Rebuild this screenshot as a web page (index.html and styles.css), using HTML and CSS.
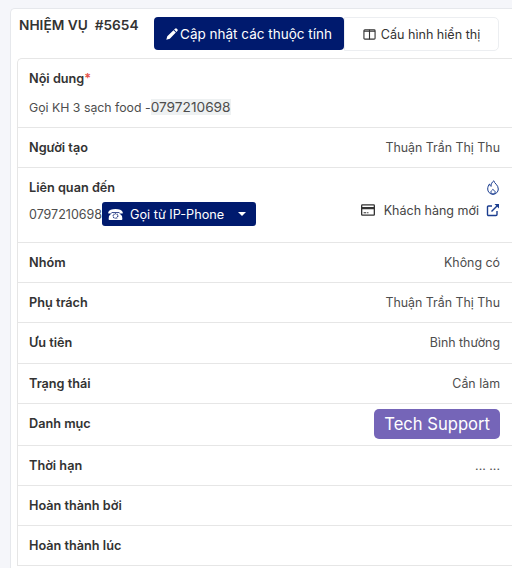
FILE: index.html
```html
<!DOCTYPE html>
<html lang="vi">
<head>
  <meta charset="UTF-8" />
  <meta name="viewport" content="width=device-width, initial-scale=1.0"/>
  <title>Nhiệm vụ #5654</title>
  <link rel="stylesheet" href="styles.css">
</head>
<body>
  <div class="panel">
    <div class="panel-head">
      <h2 class="task-title">NHIỆM VỤ &nbsp;#5654</h2>
      <div class="tabs">
        <button class="tab tab-active" type="button">
          <svg viewBox="0 0 16 16" width="12" height="12"><path fill="#fff" d="M12 .9a1.8 1.8 0 0 1 2.5 0l.6.6a1.8 1.8 0 0 1 0 2.500l-1.200 1.200-3.100-3.100zM10 2.900 13.100 6l-8 8.200L.4 15.600l1.300-4.500z"/></svg>
          Cập nhật các thuộc tính
        </button>
        <button class="tab" type="button">
          <svg viewBox="0 0 14 14" width="13" height="13" fill="none" stroke="#333" stroke-width="1.2"><rect x="1" y="2" width="12" height="10" rx="1"/><path d="M7 2v10M1 3.5h12"/></svg>
          Cấu hình hiển thị
        </button>
      </div>
    </div>

    <div class="card">
      <div class="row row-stack row-content">
        <div class="label">Nội dung<span class="req">*</span></div>
        <div class="content-text">Gọi KH 3 sạch food -<span class="phone-hl">0797210698</span></div>
      </div>
      <div class="row">
        <div class="label">Người tạo</div>
        <div class="value">Thuận Trần Thị Thu</div>
      </div>
      <div class="row row-related">
        <div class="related-top">
          <div class="label">Liên quan đến</div>
          <svg class="icon-fire" viewBox="0 0 12 15" width="12" height="15" fill="none" stroke="#1b3d8f" stroke-width="1"><path d="M6.800.8c.2 2.400 4.500 4 4.500 8.200a5.300 5.300 0 0 1-10.600 0c0-2.200.9-3.800 1.900-5.100.2 1.200.6 2 1.400 2.500C4 4.200 5 2 6.800.8z"/><path d="M6 14c-1.200 0-2.100-.9-2.100-2 0-1.100 1.300-1.600 1.900-2.600.9.800 2.400 1.500 2.400 2.600 0 1.100-1 2-2.200 2z"/></svg>
        </div>
        <div class="related-bottom">
          <div class="call-group">
            <span class="phone">0797210698</span>
            <button class="call-btn" type="button">
              <svg viewBox="0 0 16 12" width="15" height="11"><path fill="#fff" d="M8 0C4 0 .9 1.200.2 3.200c-.2.600-.2 1.300 0 1.800h3.300l.5-1.800h8l.5 1.800h3.300c.2-.5.2-1.200 0-1.800C15.100 1.200 12 0 8 0z"/><path fill="#fff" d="M4.300 4.200.9 7.500.5 11a1 1 0 0 0 1 1h13a1 1 0 0 0 1-1l-.4-3.500-3.400-3.300z"/><circle cx="8" cy="7.600" r="2.500" fill="none" stroke="#001a6e" stroke-width="1.2" stroke-dasharray="1 .7"/></svg>
              <span class="call-text">Gọi từ IP-Phone</span>
              <span class="caret"></span>
            </button>
          </div>
          <div class="customer">
            <svg viewBox="0 0 16 13" width="14" height="12"><path fill="#333" fill-rule="evenodd" d="M1.500 0h13A1.500 1.500 0 0 1 16 1.500v10a1.500 1.500 0 0 1-1.500 1.500h-13A1.500 1.500 0 0 1 0 11.500v-10A1.500 1.500 0 0 1 1.500 0zm0 1.400V3h13V1.400zm0 4.100v6.100h13V5.500zM3 9h3v1.200H3zm4 0h1.500v1.200H7z"/></svg>
            <span class="customer-name">Khách hàng mới</span>
            <svg viewBox="0 0 14 14" width="14" height="14" fill="none" stroke="#1b3d8f" stroke-width="1.4"><path d="M11 8v3.500a1 1 0 0 1-1 1H2.500a1 1 0 0 1-1-1V4a1 1 0 0 1 1-1H6"/><path d="M5.500 8.500 12.500 1.500"/><path d="M8.500 1h4.500v4.500" fill="#1b3d8f" stroke="none"/></svg>
          </div>
        </div>
      </div>
      <div class="row">
        <div class="label">Nhóm</div>
        <div class="value">Không có</div>
      </div>
      <div class="row">
        <div class="label">Phụ trách</div>
        <div class="value">Thuận Trần Thị Thu</div>
      </div>
      <div class="row row-mid">
        <div class="label">Ưu tiên</div>
        <div class="value">Bình thường</div>
      </div>
      <div class="row">
        <div class="label">Trạng thái</div>
        <div class="value">Cần làm</div>
      </div>
      <div class="row row-category">
        <div class="label">Danh mục</div>
        <span class="badge">Tech Support</span>
      </div>
      <div class="row">
        <div class="label">Thời hạn</div>
        <div class="value">... ...</div>
      </div>
      <div class="row">
        <div class="label">Hoàn thành bởi</div>
      </div>
      <div class="row">
        <div class="label">Hoàn thành lúc</div>
      </div>
    </div>
  </div>
</body>
</html>
```

FILE: styles.css
```css
* {
  box-sizing: border-box;
}

html, body {
  height: 568px;
  overflow: hidden;
}

body {
  font-family: Inter, 'Noto Sans', sans-serif;
  font-size: 12.5px;
  color: #444;
  background: #f5f6fa;
  margin: 0;
  padding: 8px 0 0 10px;
}

.panel {
  background: #fff;
  border: 1px solid #e6e8ec;
  border-right: none;
  border-bottom: none;
  border-radius: 5px 0 0 0;
  padding: 8px 0 0 6px;
  height: 560px;
  overflow: hidden;
}

.panel-head {
  display: flex;
  align-items: flex-start;
  height: 41px;
}

.task-title {
  margin: 0;
  font-size: 13.7px;
  font-weight: 600;
  line-height: 16px;
  color: #333;
  width: 137px;
  padding-left: 2px;
}

.tabs {
  display: flex;
}

.tab {
  font-family: inherit;
  font-size: 12.6px;
  height: 34px;
  display: flex;
  align-items: center;
  justify-content: center;
  gap: 5px;
  background: #fff;
  color: #333;
  border: 1px solid #eceef1;
  border-radius: 0 5px 5px 0;
  width: 155px;
  padding: 0;
}

.tab-active {
  font-size: 13.5px;
  font-weight: 400;
  background: #001a6e;
  color: #fff;
  border: none;
  border-radius: 4px;
  width: 190px;
  height: 33px;
  gap: 2px;
}

.card {
  border-top: 1px solid #e6e6e6;
  border-left: 1px solid #e6e6e6;
  border-radius: 5px 0 0 0;
}

.row {
  display: flex;
  justify-content: space-between;
  align-items: center;
  height: 40px;
  padding: 0 12px 1px 11px;
  border-bottom: 1px solid #e6e6e6;
}

.row-mid {
  height: 41px;
  padding-bottom: 2px;
}

.label {
  font-size: 12.7px;
  font-weight: 600;
  color: #333;
}

.req {
  color: #e5534b;
}

.value {
  font-size: 12.4px;
  color: #4d4d4d;
}

.row-stack {
  display: block;
}

.row-content {
  height: 69px;
  padding-top: 12px;
}

.content-text {
  margin-top: 13px;
  font-size: 12.3px;
  color: #4d4d4d;
}

.phone-hl {
  font-size: 13.7px;
  background: #eef1f2;
}

.row-related {
  display: block;
  height: 75px;
  padding-top: 11px;
}

.related-top {
  display: flex;
  justify-content: space-between;
  align-items: center;
  height: 16px;
}

.icon-fire {
  margin-right: 1px;
}

.related-bottom {
  display: flex;
  justify-content: space-between;
  align-items: center;
  margin-top: 7px;
}

.call-group {
  display: flex;
  align-items: center;
}

.phone {
  color: #4d4d4d;
}

.call-btn {
  font-family: inherit;
  font-size: 12.7px;
  font-weight: 400;
  display: flex;
  align-items: center;
  width: 154px;
  height: 24px;
  padding: 0 10px 0 6px;
  color: #fff;
  background: #001a6e;
  border: none;
  border-radius: 3px;
}

.call-text {
  margin-left: 7px;
  flex: 1;
  text-align: left;
}

.caret {
  width: 0;
  height: 0;
  border-left: 4px solid transparent;
  border-right: 4px solid transparent;
  border-top: 4px solid #fff;
}

.customer {
  display: flex;
  align-items: center;
  margin-top: -8px;
}

.customer-name {
  margin: 0 7px 0 9px;
  color: #444;
}

.row-category {
  height: 42px;
  padding-bottom: 2px;
}

.badge {
  font-size: 16.6px;
  color: #fff;
  background: #7565b8;
  border-radius: 5px;
  height: 30px;
  line-height: 30px;
  padding: 0 10px;
}
```
